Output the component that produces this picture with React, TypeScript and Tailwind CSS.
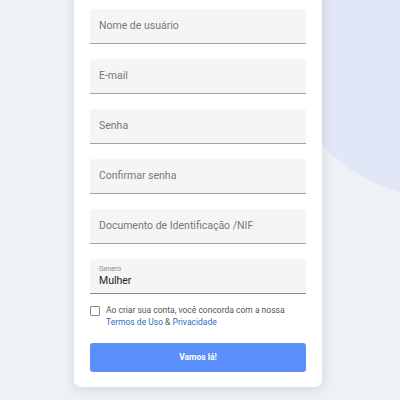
import { useState } from 'react';

const FIELDS = ['Nome de usuário', 'E-mail', 'Senha', 'Confirmar senha', 'Documento de Identificação /NIF'];

const Field = ({ placeholder }: { placeholder: string }) => (
  <div className="h-[35px] bg-[#f5f5f5] border-b border-[#a3a3a3] rounded-t-[3px] flex items-center px-[9px]">
    <span className="text-[10.5px] text-[#777] leading-none">{placeholder}</span>
  </div>
);

export default function App() {
  const [agree, setAgree] = useState(false);

  return (
    <div
      className="relative h-[400px] w-[400px] overflow-hidden bg-[#eef2f6]"
      style={{ fontFamily: 'Roboto, "Liberation Sans", sans-serif' }}
    >
      <div className="absolute left-[280px] top-[-123px] h-[320px] w-[320px] rounded-full bg-[#e2e7f7]" />

      <div className="relative ml-[74px] -mt-[12px] w-[248px] bg-white rounded-b-[7px] shadow-[0_2px_12px_rgba(120,130,150,0.25)] px-4 pt-[21px] pb-[15px]">
        <div className="flex flex-col gap-[15px]">
          {FIELDS.map((f) => (
            <Field key={f} placeholder={f} />
          ))}
          <div className="h-[35px] bg-[#f5f5f5] border-b border-[#8a8a8a] rounded-t-[3px] flex flex-col justify-center px-[9px]">
            <span className="text-[7px] text-[#8a8a8a] leading-[9px]">Genero</span>
            <span className="text-[10.5px] text-[#222] leading-[14px]">Mulher</span>
          </div>
        </div>

        <label className="mt-[10px] flex items-start gap-[6px] cursor-pointer">
          <span
            onClick={() => setAgree(!agree)}
            className="mt-[2px] h-[10px] w-[10px] shrink-0 border border-[#8a8a8a] rounded-[1px] bg-white"
          >
            {agree && <span className="block h-full w-full bg-[#5b8ff9]" />}
          </span>
          <span className="text-[8.5px] leading-[12px] text-[#555]">
            Ao criar sua conta, você concorda com a nossa
            <br />
            <span className="text-[#2e6ec0]">Termos de Uso</span> &amp;{' '}
            <span className="text-[#2e6ec0]">Privacidade</span>
          </span>
        </label>

        <button className="mt-[15px] h-[29px] w-full rounded-[3px] bg-[#5b8ff9] text-white text-[8.5px] font-bold">
          Vamos lá!
        </button>
      </div>
    </div>
  );
}
